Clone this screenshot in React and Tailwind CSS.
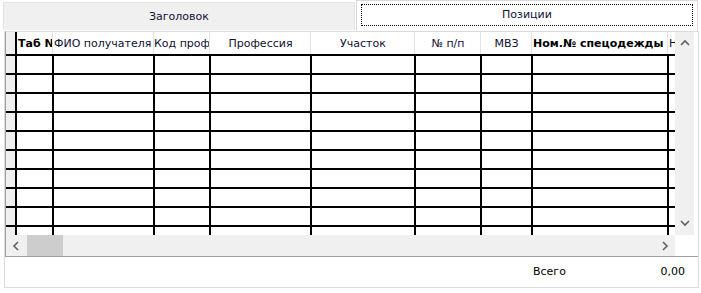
import React from 'react';

const cols = [
  { w: 37, label: 'Таб N', bold: true, align: 'justify-start' },
  { w: 101, label: 'ФИО получателя', align: 'justify-start' },
  { w: 56, label: 'Код проф', align: 'justify-start' },
  { w: 101, label: 'Профессия', align: 'justify-center' },
  { w: 104, label: 'Участок', align: 'justify-center' },
  { w: 66, label: '№ п/п', align: 'justify-center' },
  { w: 51, label: 'МВЗ', align: 'justify-center' },
  { w: 136, label: 'Ном.№ спецодежды', bold: true, align: 'justify-start' },
  { w: 60, label: 'Н', align: 'justify-start' },
];

const Chevron = ({ dir }) => {
  const pts = {
    up: '2,7 6,3 10,7',
    down: '2,4 6,8 10,4',
    left: '7,2 3,6 7,10',
    right: '4,2 8,6 4,10',
  }[dir];
  return (
    <svg width="12" height="12" viewBox="0 0 12 12">
      <polyline points={pts} fill="none" stroke="#606060" strokeWidth="1.6" />
    </svg>
  );
};

export default function App() {
  const rows = Array.from({ length: 10 });
  return (
    <div className="w-[701px] h-[293px] bg-white overflow-hidden text-[11px] text-[#101030]" style={{ fontFamily: '"DejaVu Sans", Verdana, sans-serif' }}>
      {/* Tabs */}
      <div className="flex h-[31px]">
        <div className="mt-[2px] ml-[3px] w-[352px] h-[28px] bg-[#f0f0f0] border border-b-0 border-[#e3e3e3] flex items-center justify-center pt-[1px]">
          Заголовок
        </div>
        <div className="ml-[1px] w-[342px] h-[31px] bg-white border border-b-0 border-[#d9d9d9] px-[4px] pt-[3px] pb-[5px]">
          <div className="h-full border border-dotted border-black flex items-center justify-center pt-[1px]">Позиции</div>
        </div>
      </div>

      {/* Panel */}
      <div className="ml-[4px] w-[695px] h-[257px] border border-t-0 border-[#dcdcdc] flex flex-col">
        <div className="border-l border-b border-[#a0a0a0] border-t border-t-[#dcdcdc] flex flex-col">
          <div className="flex h-[203px]">
            {/* grid body */}
            <div className="w-[669px] overflow-hidden">
              <div className="flex h-[24px] border-b-2 border-black">
                <div className="w-[9px] shrink-0 bg-[#f0f0f0]" />
                {cols.map((c, i) => (
                  <div
                    key={i}
                    className={`shrink-0 flex items-center overflow-hidden whitespace-nowrap pt-[2px] ${i === 2 ? 'pl-0' : 'pl-[1px]'} ${c.align} ${i === 0 ? 'border-l-2 border-black' : 'border-l border-[#e3e3e3]'} ${c.bold ? 'font-bold text-black' : ''}`}
                    style={{ width: c.w }}
                  >
                    {c.label}
                  </div>
                ))}
              </div>
              {rows.map((_, r) => (
                <div key={r} className="flex h-[19px] border-b-2 border-black">
                  <div className="w-[9px] shrink-0 bg-[#f0f0f0]" />
                  {cols.map((c, i) => (
                    <div key={i} className="shrink-0 border-l-2 border-black" style={{ width: c.w }} />
                  ))}
                </div>
              ))}
            </div>
            {/* vertical scrollbar */}
            <div className="w-[19px] bg-[#f0f0f0] flex flex-col items-center justify-between py-[6px]">
              <Chevron dir="up" />
              <Chevron dir="down" />
            </div>
            <div className="flex-1 bg-white" />
          </div>
          {/* horizontal scrollbar */}
          <div className="flex h-[21px]">
            <div className="w-[669px] bg-[#f0f0f0] flex items-center">
              <div className="w-[21px] flex justify-center"><Chevron dir="left" /></div>
              <div className="w-[36px] h-full bg-[#cdcdcd]" />
              <div className="flex-1" />
              <div className="w-[21px] flex justify-center"><Chevron dir="right" /></div>
            </div>
            <div className="flex-1 bg-white" />
          </div>
        </div>
        {/* footer */}
        <div className="flex-1 flex items-center pt-[1px]">
          <div className="ml-[528px] text-black">Всего</div>
          <div className="ml-auto mr-[13px] text-black">0,00</div>
        </div>
      </div>
    </div>
  );
}
